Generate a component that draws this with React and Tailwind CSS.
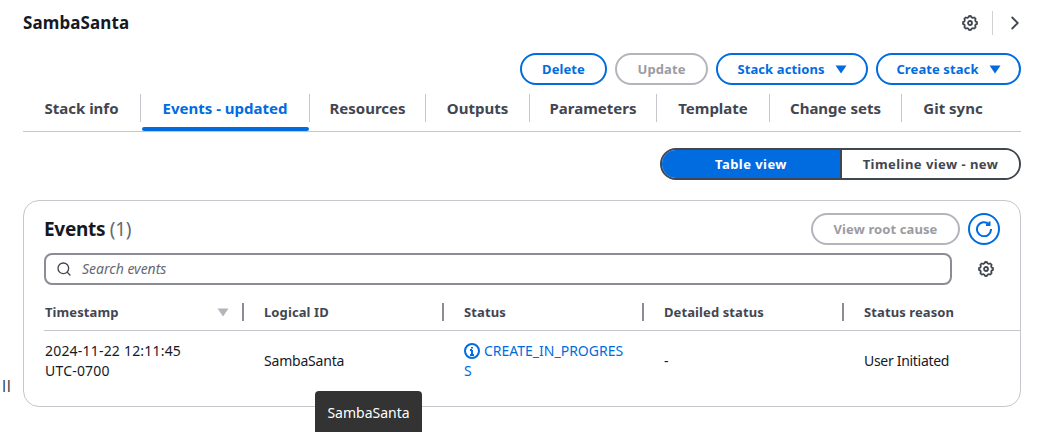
import React from "react";
import { ChevronRight, Search } from "lucide-react";

const Caret = ({ className }) => (
  <svg viewBox="0 0 12 9" className={className} fill="currentColor" aria-hidden="true">
    <path d="M0.5 0.5h11L6 8.5z" />
  </svg>
);

const Gear = ({ className }) => (
  <svg viewBox="0 0 16 16" className={className} fill="none" stroke="currentColor" strokeWidth="1.8" strokeLinejoin="round" aria-hidden="true">
    <path d="M13.33 5.79a1.94 1.94 0 0 1 .29-1.97 6.98 6.98 0 0 0-1.44-1.44 1.94 1.94 0 0 1-3.16-1.31 7.04 7.04 0 0 0-2.04 0 1.94 1.94 0 0 1-3.16 1.31 6.99 6.99 0 0 0-1.44 1.44 1.94 1.94 0 0 1-1.31 3.16 7.04 7.04 0 0 0 0 2.04 1.94 1.94 0 0 1 1.31 3.16 6.98 6.98 0 0 0 1.44 1.44 1.94 1.94 0 0 1 3.16 1.31 7.04 7.04 0 0 0 2.04 0 1.94 1.94 0 0 1 3.16-1.31 6.98 6.98 0 0 0 1.44-1.44 1.94 1.94 0 0 1 1.31-3.16 7.04 7.04 0 0 0 0-2.04 1.94 1.94 0 0 1-1.6-1.19Z" />
    <circle cx="8" cy="8" r="2" />
  </svg>
);

const Btn = ({ children, disabled, caret, w }) => (
  <div
    className={`flex h-8 items-center justify-center rounded-2xl border-2 bg-white text-[13px] leading-4 font-bold tracking-[0.1px] ${w} ${
      disabled ? "border-[#b4b4bb] text-[#9b9ba3]" : "border-[#006ce0] text-[#006ce0]"
    }`}
  >
    {children}
    {caret && <Caret className="ml-[10px] h-[9px] w-3" />}
  </div>
);

const tabs = [
  ["Stack info", "w-[118px]"],
  ["Events - updated", "w-[169px]"],
  ["Resources", "w-[116px]"],
  ["Outputs", "w-[104px]"],
  ["Parameters", "w-[127px]"],
  ["Template", "w-[113px]"],
  ["Change sets", "w-[132px]"],
  ["Git sync", "w-[102px]"],
];
const cols = ["Logical ID", "Status", "Detailed status", "Status reason"];

export default function App() {
  return (
    <div className="relative h-[432px] w-[1045px] overflow-hidden bg-white pr-6 pl-[23px] font-['Noto_Sans',sans-serif] text-[#16191f]">
      <div className="flex h-[53px] items-start justify-between">
        <h1 className="mt-[11px] text-[17px] leading-6 font-bold tracking-[0.1px]">SambaSanta</h1>
        <div className="mt-[11px] flex h-6 items-center">
          <Gear className="h-4 w-4 text-[#414750]" />
          <div className="mr-[11px] ml-[14px] h-6 w-px bg-[#d1d1d6]" />
          <ChevronRight className="-mr-[5px] h-[22px] w-[22px] text-[#414750]" strokeWidth={2} />
        </div>
      </div>

      <div className="flex justify-end gap-2">
        <Btn w="w-[87px]">Delete</Btn>
        <Btn w="w-[93px]" disabled>Update</Btn>
        <Btn w="w-[152px]" caret>Stack actions</Btn>
        <Btn w="w-[145px]" caret>Create stack</Btn>
      </div>

      <div className="mt-[7px] flex h-[40px] items-start border-b border-[#c6c6cd] pt-[2px]">
        {tabs.map(([t, w], i) => {
          const active = i === 1;
          return (
            <div
              key={t}
              className={`relative flex h-7 shrink-0 items-center justify-center text-[15px] leading-5 font-bold whitespace-nowrap ${w} ${
                i < tabs.length - 1 ? "border-r border-[#c6c6cd]" : ""
              } ${active ? "text-[#006ce0]" : "text-[#424650]"}`}
            >
              {t}
              {active && <div className="absolute right-0 -bottom-[9px] left-[1px] h-1 rounded-sm bg-[#006ce0]" />}
            </div>
          );
        })}
      </div>

      <div className="mt-4 flex justify-end">
        <div className="flex h-8 overflow-hidden rounded-2xl border-2 border-[#414750] text-[13px] leading-4 font-bold tracking-[0.45px]">
          <div className="flex w-[178px] items-center justify-center bg-[#006ce0] text-white">Table view</div>
          <div className="flex w-[179px] items-center justify-center border-l-2 border-[#414750] bg-white text-[#424650]">Timeline view - new</div>
        </div>
      </div>

      <div className="mt-5 h-[207px] rounded-2xl border border-[#c6c6cd] bg-white">
        <div className="flex items-start justify-between pt-[12px] pr-5 pl-5">
          <div className="mt-[4px] text-[19px] leading-6 tracking-[-0.3px]">
            <span className="font-bold">Events</span> <span className="text-[#656871]">(1)</span>
          </div>
          <div className="flex gap-2">
            <Btn w="w-[149px]" disabled>View root cause</Btn>
            <div className="flex h-8 w-8 items-center justify-center rounded-full border-2 border-[#006ce0] text-[#006ce0]">
              <svg viewBox="0 0 16 16" className="h-4 w-4" fill="none" stroke="currentColor" strokeWidth="2" aria-hidden="true">
                <path d="M13 3.4A7 7 0 1 0 15 8" />
                <path d="M13.5 0.5V4H10" />
              </svg>
            </div>
          </div>
        </div>

        <div className="mt-[8px] flex items-center pr-[20px] pl-5">
          <div className="flex h-8 w-[908px] items-center rounded-lg border-2 border-[#8c8c94] bg-white pl-[10px]">
            <Search className="h-4 w-4 text-[#424650]" strokeWidth={2} />
            <span className="ml-[10px] text-[14px] leading-5 text-[#656871] italic">Search events</span>
          </div>
          <Gear className="ml-[26px] h-4 w-4 text-[#414750]" />
        </div>

        <div className="mt-[18px] ml-5 flex h-[28px] items-start border-b border-[#c6c6cd] text-[13px] leading-5 font-bold tracking-[0.1px] text-[#424650]">
          <div className="flex h-[18px] w-[200px] shrink-0 items-center justify-between pl-[1px]">
            <span>Timestamp</span>
            <div className="flex items-center gap-[13px]">
              <Caret className="h-[9px] w-3 text-[#b4b4bb]" />
              <div className="h-[18px] w-0.5 bg-[#8c8c94]" />
            </div>
          </div>
          {cols.map((c, i) => (
            <div key={c} className={`flex h-[18px] shrink-0 items-center justify-between pl-[20px] ${i < 3 ? "w-[200px]" : "w-[176px]"}`}>
              <span>{c}</span>
              {i < 3 && <div className="h-[18px] w-0.5 bg-[#8c8c94]" />}
            </div>
          ))}
        </div>

        <div className="ml-5 flex h-[60px] items-center text-[14px] leading-5 text-[#16191f]">
          <div className="w-[200px] shrink-0 pl-[1px] tracking-[0.2px]">2024-11-22 12:11:45<br />UTC-0700</div>
          <div className="w-[200px] shrink-0 pl-[20px] tracking-[-0.2px]">SambaSanta</div>
          <div className="w-[200px] shrink-0 pl-[20px] text-[#006ce0]">
            <div className="w-[160px] whitespace-nowrap">
              <svg viewBox="0 0 16 16" className="mr-[4px] inline h-4 w-4 align-[-3px]" fill="none" stroke="currentColor" strokeWidth="2" aria-hidden="true">
                <circle cx="8" cy="8" r="7" />
                <path d="M8 7v5M6 7h2M6 12h4M8 4v1.6" />
              </svg>
              CREATE_IN_PROGRES<br />S
            </div>
          </div>
          <div className="w-[200px] shrink-0 pl-[20px]">-</div>
          <div className="w-[176px] shrink-0 pl-[20px] tracking-[-0.3px]">User Initiated</div>
        </div>
      </div>

      <div className="absolute top-[376px] left-[2px] text-[16px] leading-5 tracking-[0.5px] text-[#424650]">ll</div>
      <div className="absolute top-[391px] left-[315px] flex h-[41px] w-[107px] items-start justify-center rounded-t bg-[#333333] pt-[12px] text-[14px] leading-5 text-white">SambaSanta</div>
    </div>
  );
}
